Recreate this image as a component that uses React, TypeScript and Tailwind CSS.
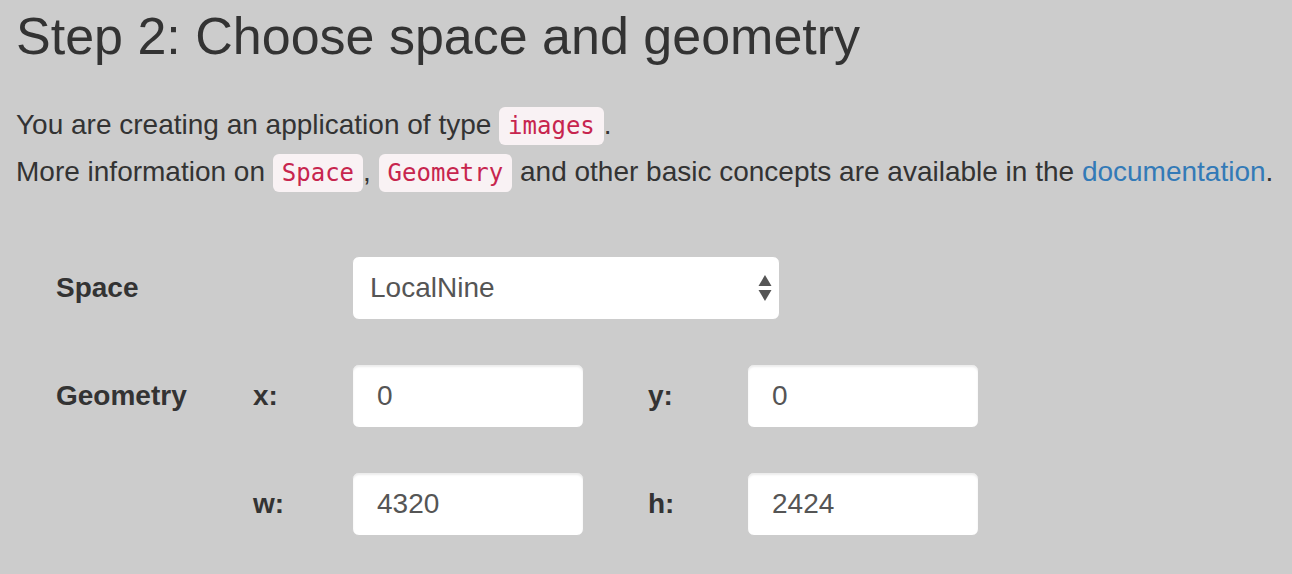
import React from "react";

const Code = ({ children }: { children: React.ReactNode }) => (
  <code className="rounded-[6px] bg-[#f9f2f4] px-[9px] py-[5px] font-['DejaVu_Sans_Mono',monospace] text-[24px] text-[#c7254e]">
    {children}
  </code>
);

const Field = ({ value }: { value: string }) => (
  <input
    readOnly
    value={value}
    className="h-[64px] w-[232px] rounded-[7px] border border-[#ccc] bg-white px-[24px] text-[28px] text-[#555] shadow-[inset_0_2px_2px_rgba(0,0,0,0.075)] outline-none"
  />
);

const Label = ({ children, className = "" }: { children: React.ReactNode; className?: string }) => (
  <label className={"text-[28px] font-bold text-[#333] " + className}>{children}</label>
);

export default function App() {
  return (
    <div className="min-h-[574px] w-full bg-[#cccccc] px-[16px] pt-[8px] font-['Liberation_Sans',Arial,sans-serif] text-[#333]">
      <h2 className="text-[52px] leading-[1.1] font-normal">Step 2: Choose space and geometry</h2>

      <div className="mt-[37px] text-[28px] leading-[46px]">
        <p>
          You are creating an application of type <Code>images</Code>.
        </p>
        <p>
          More information on <Code>Space</Code>, <Code>Geometry</Code> and other basic concepts are available in
          the <a className="text-[#337ab7]">documentation</a>.
        </p>
      </div>

      <div className="mt-[60px] flex flex-col gap-[44px] pl-[40px]">
        <div className="flex items-center">
          <Label className="w-[296px]">Space</Label>
          <div className="relative flex h-[64px] w-[428px] items-center rounded-[7px] border border-[#ccc] bg-white pl-[17px] text-[28px] text-[#555]">
            LocalNine
            <svg className="absolute right-[7px] top-[18px]" width="14" height="27" viewBox="0 0 14 27">
              <path d="M7 0 L13.5 11 L0.5 11 Z" fill="#555" />
              <path d="M0.5 15 L13.5 15 L7 26 Z" fill="#555" />
            </svg>
          </div>
        </div>

        <div className="flex items-center">
          <Label className="w-[197px]">Geometry</Label>
          <Label className="w-[99px]">x:</Label>
          <Field value="0" />
          <Label className="ml-[64px] w-[99px]">y:</Label>
          <Field value="0" />
        </div>

        <div className="flex items-center">
          <div className="w-[197px]" />
          <Label className="w-[99px]">w:</Label>
          <Field value="4320" />
          <Label className="ml-[64px] w-[99px]">h:</Label>
          <Field value="2424" />
        </div>
      </div>
    </div>
  );
}
